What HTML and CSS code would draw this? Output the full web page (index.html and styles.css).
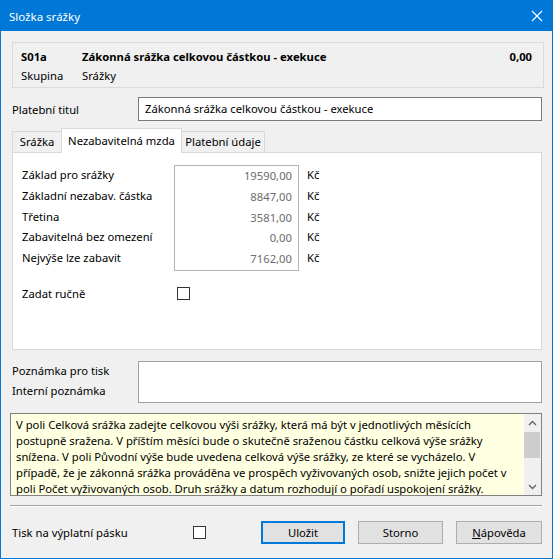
FILE: index.html
```html
<!DOCTYPE html>
<html lang="cs">
<head>
<meta charset="utf-8">
<title>Složka srážky</title>
<link rel="stylesheet" href="styles.css">
</head>
<body>
<div class="window">
  <div class="titlebar">
    <span class="title">Složka srážky</span>
    <svg class="close" width="12" height="12" viewBox="0 0 12 12"><path d="M1 1L11 11M11 1L1 11" stroke="#ffffff" stroke-width="1.1" fill="none"/></svg>
  </div>
  <div class="content">
    <div class="header-panel">
      <div class="hrow bold"><span class="hcode">S01a</span><span class="hname">Zákonná srážka celkovou částkou - exekuce</span><span class="hval">0,00</span></div>
      <div class="hrow"><span class="hcode">Skupina</span><span class="hname">Srážky</span></div>
    </div>

    <div class="field-row">
      <span class="flabel">Platební titul</span>
      <div class="input">Zákonná srážka celkovou částkou - exekuce</div>
    </div>

    <div class="tabs">
      <div class="tab t1">Srážka</div>
      <div class="tab active t2">Nezabavitelná mzda</div>
      <div class="tab t3">Platební údaje</div>
    </div>
    <div class="tabpanel">
      <div class="amounts">
        <div class="labels">
          <div class="line">Základ pro srážky</div>
          <div class="line">Základní nezabav. částka</div>
          <div class="line">Třetina</div>
          <div class="line">Zabavitelná bez omezení</div>
          <div class="line">Nejvýše lze zabavit</div>
        </div>
        <div class="valbox">
          <div class="line">19590,00</div>
          <div class="line">8847,00</div>
          <div class="line">3581,00</div>
          <div class="line">0,00</div>
          <div class="line">7162,00</div>
        </div>
        <div class="units">
          <div class="line">Kč</div>
          <div class="line">Kč</div>
          <div class="line">Kč</div>
          <div class="line">Kč</div>
          <div class="line">Kč</div>
        </div>
      </div>
      <div class="manual">
        <span class="mlabel">Zadat ručně</span>
        <span class="check"></span>
      </div>
    </div>

    <div class="notes">
      <div class="nlabels">
        <div class="nline">Poznámka pro tisk</div>
        <div class="nline">Interní poznámka</div>
      </div>
      <div class="textarea"></div>
    </div>

    <div class="info">
      <div class="info-text">
        <div class="iline">V poli Celková srážka zadejte celkovou výši srážky, která má být v jednotlivých měsících</div>
        <div class="iline">postupně sražena. V příštím měsíci bude o skutečně sraženou částku celková výše srážky</div>
        <div class="iline">snížena. V poli Původní výše bude uvedena celková výše srážky, ze které se vycházelo. V</div>
        <div class="iline">případě, že je zákonná srážka prováděna ve prospěch vyživovaných osob, snižte jejich počet v</div>
        <div class="iline">poli Počet vyživovaných osob. Druh srážky a datum rozhodují o pořadí uspokojení srážky.</div>
      </div>
      <div class="scrollbar">
        <div class="sb-btn"><svg width="9" height="6" viewBox="0 0 9 6"><path d="M1 5L4.5 1.5L8 5" stroke="#606060" stroke-width="1.3" fill="none"/></svg></div>
        <div class="sb-track"><div class="sb-thumb"></div></div>
        <div class="sb-btn"><svg width="9" height="6" viewBox="0 0 9 6"><path d="M1 1L4.5 4.5L8 1" stroke="#606060" stroke-width="1.3" fill="none"/></svg></div>
      </div>
    </div>

    <div class="separator"></div>

    <div class="footer">
      <span class="tlabel">Tisk na výplatní pásku</span>
      <span class="check"></span>
      <div class="buttons">
        <div class="btn default b1">Uložit</div>
        <div class="btn b2">Storno</div>
        <div class="btn b3"><u>N</u>ápověda</div>
      </div>
    </div>
  </div>
</div>
</body>
</html>
```

FILE: styles.css
```css
* { box-sizing: border-box; }

body {
  margin: 0;
  font-family: "Noto Sans", "Liberation Sans", Arial, sans-serif;
  font-size: 11.25px;
  color: #000;
  background: #f0f0f0;
}

.window {
  width: 553px;
  height: 559px;
  border: 1px solid #0078d7;
  border-top: none;
  background: #f0f0f0;
}

.titlebar {
  height: 31px;
  margin: 0 -1px;
  background: #0078d7;
  color: #fff;
  display: flex;
  align-items: center;
  justify-content: space-between;
  padding: 2px 10px 0 9px;
  font-size: 11.5px;
}

.title { line-height: 16px; }

.close { display: block; margin-top: -2px; }

.content {
  padding: 0 10px 0 11px;
}

.header-panel {
  margin-top: 11px;
  margin-right: -2px;
  height: 46px;
  border: 1px solid #dadada;
  padding: 4px 11px 0 8px;
}

.hrow {
  display: flex;
  height: 19px;
  line-height: 19px;
}

.bold { font-weight: bold; }

.hcode { width: 61px; }
.hname { flex: 1; }
.hval { text-align: right; }

.field-row {
  margin-top: 9px;
  display: flex;
  align-items: center;
}

.flabel { width: 126px; }

.input {
  flex: 1;
  height: 24px;
  line-height: 22px;
  border: 1px solid #7a7a7a;
  background: #fff;
  padding-left: 6px;
}

.tabs {
  margin-top: 7px;
  display: flex;
  align-items: flex-end;
  height: 24px;
}

.tab {
  height: 21px;
  line-height: 19px;
  border: 1px solid #d9d9d9;
  border-bottom: none;
  background: #f0f0f0;
  text-align: center;
}

.t1 { width: 49px; border-right: none; }
.t2 { width: 121px; }
.t3 { width: 83px; border-left: none; }

.tab.active {
  height: 25px;
  margin-bottom: -1px;
  background: #fff;
  line-height: 23px;
  position: relative;
  z-index: 1;
}

.tabpanel {
  height: 198px;
  border: 1px solid #d9d9d9;
  background: #fff;
  padding: 12px 0 0 9px;
}

.amounts {
  display: flex;
  align-items: flex-start;
}

.line {
  height: 20.75px;
  line-height: 20px;
  white-space: nowrap;
}

.labels { width: 152px; }

.valbox {
  width: 125px;
  height: 106px;
  border: 1px solid #b4b4b4;
  text-align: right;
  color: #6d6d6d;
  padding: 0 6px 0 0;
}

.units {
  margin-left: 8px;
}

.manual {
  margin-top: 12px;
  display: flex;
  align-items: center;
  height: 20px;
}

.mlabel { width: 155px; }

.check {
  display: block;
  width: 13px;
  height: 13px;
  border: 1px solid #333;
  background: #fff;
}

.notes {
  margin-top: 11px;
  display: flex;
}

.nlabels { width: 126px; }

.nline { height: 20px; line-height: 20px; }

.textarea {
  flex: 1;
  height: 42px;
  border: 1px solid #a0a0a0;
  background: #fff;
}

.info {
  margin-top: 10px;
  margin-left: -2px;
  height: 83px;
  border: 1px solid #828282;
  background: #ffffe1;
  display: flex;
}

.info-text {
  flex: 1;
  padding: 3px 0 0 5px;
  overflow: hidden;
}

.iline {
  height: 16px;
  line-height: 16px;
  white-space: nowrap;
}

.scrollbar {
  width: 17px;
  background: #f0f0f0;
  display: flex;
  flex-direction: column;
}

.sb-btn {
  height: 17px;
  display: flex;
  align-items: center;
  justify-content: center;
}

.sb-track {
  flex: 1;
  padding-top: 1px;
}

.sb-thumb {
  height: 26px;
  background: #cdcdcd;
  margin-right: 1px;
}

.separator {
  margin-top: 9px;
  margin-left: -2px;
  height: 2px;
  border-top: 1px solid #a0a0a0;
  border-bottom: 1px solid #ffffff;
}

.footer {
  margin-top: 14px;
  display: flex;
  align-items: center;
  height: 23px;
}

.tlabel { width: 181px; }

.buttons {
  margin-left: auto;
  display: flex;
  gap: 13px;
}

.btn {
  height: 23px;
  line-height: 21px;
  border: 1px solid #adadad;
  background: #e1e1e1;
  text-align: center;
}

.btn.default {
  border: 2px solid #0078d7;
  line-height: 19px;
}

.b1 { width: 84px; }
.b2 { width: 85px; }
.b3 { width: 86px; }
```
